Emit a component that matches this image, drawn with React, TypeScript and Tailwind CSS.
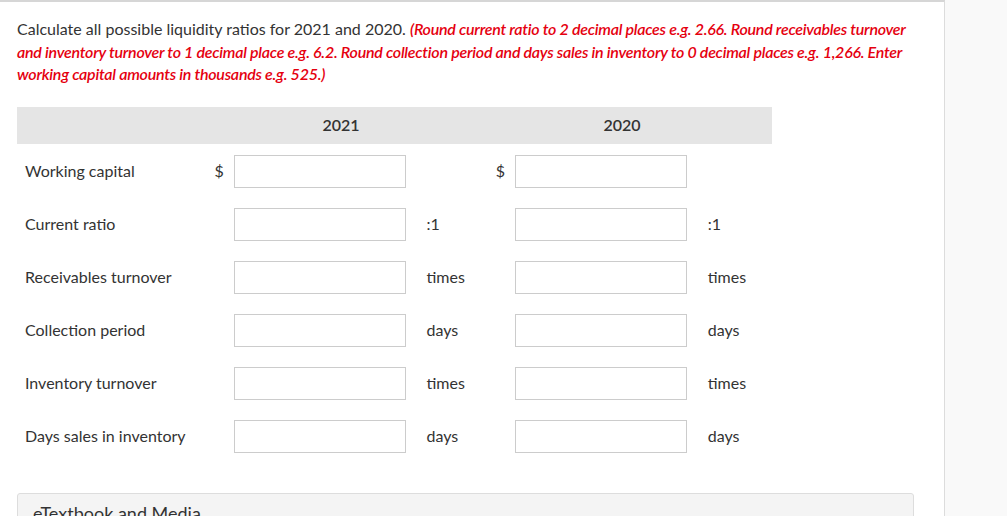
import React from "react";

type Row = { label: string; dollar?: boolean; unit?: string };

const rows: Row[] = [
  { label: "Working capital", dollar: true },
  { label: "Current ratio", unit: ":1" },
  { label: "Receivables turnover", unit: "times" },
  { label: "Collection period", unit: "days" },
  { label: "Inventory turnover", unit: "times" },
  { label: "Days sales in inventory", unit: "days" },
];

function Cell({ dollar, unit }: { dollar?: boolean; unit?: string }) {
  return (
    <div className="flex items-center w-[282px]">
      <span className="w-[24px] pl-[5px] text-[16px]">{dollar ? "$" : ""}</span>
      <div className="w-[172px] h-[33px] border border-[#cccccc] bg-white" />
      <span className="ml-[21px] text-[16px]">{unit ?? ""}</span>
    </div>
  );
}

export default function App() {
  return (
    <div
      className="flex w-[1007px] h-[516px] overflow-hidden bg-[#f9f9f9] text-[#333333]"
      style={{ fontFamily: "Lato, 'Noto Sans', sans-serif" }}
    >
      <div className="w-[945px] shrink-0 bg-white border-t-2 border-t-[#d6d6d6] border-r border-r-[#dcdcdc] pl-[17px] pt-[16px]">
        <p className="w-[925px] text-[16px] leading-[22.5px] whitespace-nowrap">
          Calculate all possible liquidity ratios for 2021 and 2020.{" "}
          <span className="text-[#e5000f] font-semibold italic tracking-[-0.25px]">
            (Round current ratio to 2 decimal places e.g. 2.66. Round receivables turnover
            <br />
            and inventory turnover to 1 decimal place e.g. 6.2. Round collection period and days sales in
            inventory to 0 decimal places e.g. 1,266. Enter
            <br />
            working capital amounts in thousands e.g. 525.)
          </span>
        </p>

        <div className="w-[755px] mt-[21px]">
          <div className="flex items-center h-[37px] bg-[#e5e5e5] text-[16px] font-semibold">
            <div className="w-[183px]" />
            <div className="w-[282px] text-center">2021</div>
            <div className="w-[280px] text-center">2020</div>
          </div>
          <div className="mt-[1px]">
            {rows.map((r) => (
              <div key={r.label} className="flex items-center h-[53px]">
                <div className="w-[193px] pl-[8px] text-[16px]">{r.label}</div>
                <Cell dollar={r.dollar} unit={r.unit} />
                <Cell dollar={r.dollar} unit={r.unit} />
              </div>
            ))}
          </div>
        </div>

        <div className="w-[897px] mt-[30px] h-[40px] bg-[#f4f4f4] border border-[#dddddd] rounded-t-[3px] pl-[15px] pt-[7px] text-[18px] leading-[24px]">
          eTextbook and Media
        </div>
      </div>
      <div className="flex-1" />
    </div>
  );
}
